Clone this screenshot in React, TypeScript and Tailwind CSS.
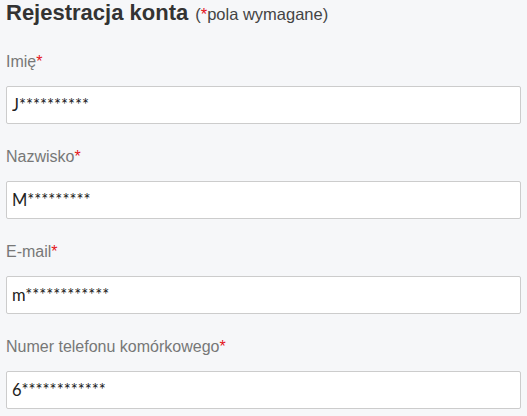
const fields = [
  { label: "Imię", value: "J**********" },
  { label: "Nazwisko", value: "M*********" },
  { label: "E-mail", value: "m************" },
  { label: "Numer telefonu komórkowego", value: "6************" },
];

export default function App() {
  return (
    <div className="min-h-screen w-full bg-[#f6f7f9] pl-[6px] pr-[6px] font-['Liberation_Sans',Arial,sans-serif]">
      {/* Heading */}
      <h2 className="flex items-baseline gap-[7px] leading-[26px] text-[#333]">
        <span className="text-[22px] font-bold">Rejestracja konta</span>
        <span className="text-[16.5px] text-[#444]">
          (<span className="text-[#e4141b]">*</span>pola wymagane)
        </span>
      </h2>

      <div className="mt-[25px] flex flex-col gap-[23px]">
        {fields.map((f) => (
          <div key={f.label} className="flex flex-col gap-[14px]">
            <label className="text-[16px] leading-[20px] text-[#777]">
              {f.label}
              <span className="text-[#e4141b]">*</span>
            </label>
            <input
              readOnly
              value={f.value}
              className="h-[38px] w-full rounded-[2px] border border-[#cccccc] bg-white px-[5px] text-[16.5px] text-[#222] font-['Lato','Open_Sans',sans-serif] outline-none"
            />
          </div>
        ))}
      </div>
    </div>
  );
}
